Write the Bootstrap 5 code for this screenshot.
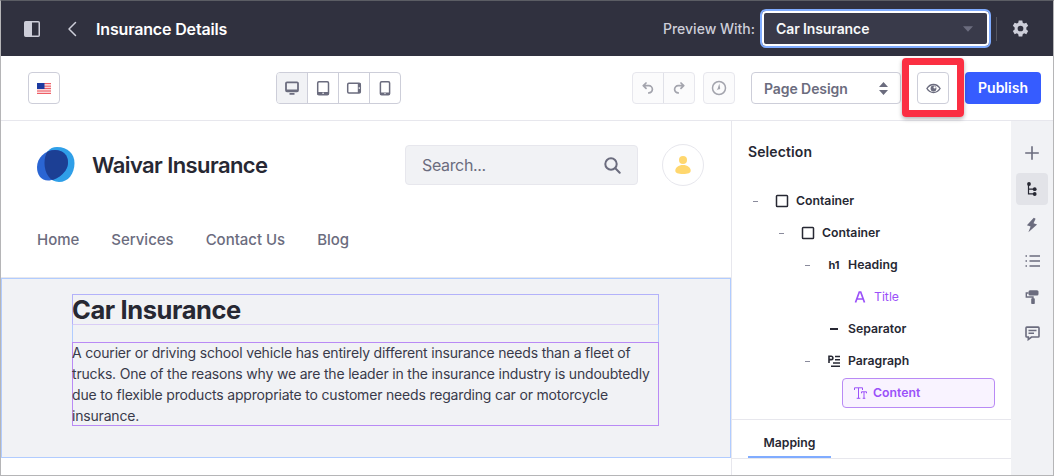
<!DOCTYPE html>
<html lang="en">
<head>
<meta charset="utf-8">
<meta name="viewport" content="width=device-width, initial-scale=1">
<title>Insurance Details</title>
<link href="https://cdn.jsdelivr.net/npm/bootstrap@5.3.0/dist/css/bootstrap.min.css" rel="stylesheet">
<style>
  html, body { height: 100%; overflow: hidden; }
  body { font-family: Inter, "Liberation Sans", sans-serif; color: #272833; font-size: 16px; line-height: 1.5; background: #fff; }
  svg { display: block; flex: none; }
  .frame { width: 1054px; height: 476px; border: 1px solid #b5b5b7; border-top-color: #5b5d64; overflow: hidden; }
  .topbar { height: 55px; background: #30313f; color: #cdced9; padding: 0 24px 0 23px; }
  .topbar .back { margin-right: -4px; }
  .topbar .title { color: #fff; font-weight: 600; margin-left: 20px; letter-spacing: -.16px; }
  .topbar .with { font-weight: 500; font-size: 14px; margin-right: 5px; }
  .picker { width: 231px; height: 39px; background: #393a4a; border: 2px solid #80acff; box-shadow: inset 0 0 0 2px #fff; border-radius: 6px; color: #f7f8f9; font-weight: 600; font-size: 14px; letter-spacing: -.1px; padding: 0 16px 0 14px; }
  .vline { width: 1px; height: 24px; background: #54555f; margin: 0 15px 0 5px; }
  .tools { height: 65px; border-bottom: 1px solid #e7e7ed; padding: 0 12px 0 27px; }
  .tbtn { width: 32px; height: 32px; border: 1px solid #cdced9; border-radius: 4px; background: #fff; color: #6b6c7e; padding: 0; display: flex; align-items: center; justify-content: center; }
  .seg { height: 32px; border: 1px solid #cdced9; border-radius: 4px; overflow: hidden; }
  .seg > span { width: 30px; display: flex; align-items: center; justify-content: center; color: #6b6c7e; }
  .seg > span + span { border-left: 1px solid #cdced9; width: 31px; }
  .seg .on { background: #f1f2f5; width: 30px; }
  .sizes { margin-left: 216px; }
  .dim { border-color: #e7e7ed; background: #fbfbfc; color: #a3a4ad; }
  .seg.dim > span { color: #a3a4ad; }
  .seg.dim > span + span { border-color: #e0e1e8; }
  .design { width: 150px; height: 32px; border: 1px solid #cdced9; border-radius: 4px; color: #6b6c7e; font-weight: 600; font-size: 14px; letter-spacing: -.08px; padding: 0 12px; }
  .spot { width: 62px; height: 59px; margin: 2px 0 0 1px; border: 7px solid #fb2f42; border-radius: 4px; box-shadow: 0 2px 4px rgba(0,0,0,.3); z-index: 2; }
  .spot .tbtn { margin-top: 1px; }
  .pub { width: 76px; height: 32px; margin-left: 1px; background: #365cff; color: #fff; border: 0; border-radius: 4px; font-weight: 600; font-size: 14px; padding: 0; line-height: 32px; }
  .canvas { width: 731px; border-right: 1px solid #e7e7ed; }
  .brand { height: 88px; padding: 0 27px 0 36px; }
  .brand .name { font-size: 22px; font-weight: 600; margin-left: 17px; letter-spacing: -.58px; color: #272833; }
  .find { width: 233px; height: 40px; border: 1px solid #e7e7ed; background: #f1f2f5; border-radius: 4px; color: #6b6c7e; padding: 0 16px; letter-spacing: -.35px; }
  .face { width: 42px; height: 42px; border: 1px solid #e7e7ed; border-radius: 50%; margin-left: 24px; }
  .menu { height: 69px; padding: 19px 36px 0; gap: 32px; color: #6b6c7e; font-weight: 500; font-size: 15px; letter-spacing: -.02px; line-height: 24px; border-bottom: 1px solid #e7e7ed; }
  .hero { height: 180px; width: 730px; background: #f1f2f5; border: 1px solid #b1ccff; padding: 15px 70px 0; }
  .hbox { border: 1px solid #b1ccff; height: 132px; width: 587px; }
  .hbox h1 { font-size: 25.5px; font-weight: 700; line-height: 31px; height: 31px; margin: -1px -1px 17px; border: 1px solid #b3b2fa; border-bottom-color: #d9cdf6; letter-spacing: -.41px; color: #272833; }
  .hbox h1 span { display: block; margin: -1px 0 0 -1px; }
  .hbox p { margin: 0 -1px; height: 84px; border: 1px solid #b98af5; font-size: 14px; letter-spacing: -.185px; line-height: 21px; white-space: nowrap; color: #393a4a; }
  .hbox p span { display: block; margin: -1px 0 0 -1px; }
  .side { width: 279px; color: #272833; }
  .side h2 { font-size: 14px; font-weight: 600; line-height: 20px; margin: 21px 0 23px 16px; letter-spacing: .1px; }
  .node { height: 32px; font-size: 12.25px; font-weight: 600; display: flex; align-items: center; }
  .node .dash { width: 5px; height: 1px; background: #8a8b9c; margin-right: 16px; }
  .node .dash.off { background: transparent; }
  .node .ico { width: 16px; height: 16px; margin-right: 6px; display: flex; align-items: center; justify-content: center; font-size: 11px; font-weight: 700; }
  .d0 { padding-left: 21px; } .d1 { padding-left: 47px; } .d2 { padding-left: 73px; } .d3 { padding-left: 99px; color: #9b51f9; }
  .node.picked { margin: 1px 0 0 110px; width: 153px; height: 30px; border: 1px solid #b98af5; border-radius: 4px; background: #f9f3ff; padding-left: 9px; color: #9b51f9; }
  .node.picked .ico { margin-right: 5px; }
  .tabs { margin-top: 11px; height: 40px; border-top: 1px solid #e7e7ed; border-bottom: 1px solid #e7e7ed; padding-left: 16px; }
  .tabs span { display: block; width: 83px; height: 38px; border-bottom: 2px solid #80acff; text-align: center; font-size: 12.25px; font-weight: 600; line-height: 46px; }
  .rail { width: 42px; background: #f1f2f5; color: #6b6c7e; padding: 16px 0 0 5px; gap: 4px; }
  .rail span { width: 32px; height: 32px; border-radius: 4px; display: flex; align-items: center; justify-content: center; }
  .rail .on { background: #e2e3e8; color: #272833; }
</style>
</head>
<body>
<div class="frame d-flex flex-column">
  <header class="topbar d-flex align-items-center">
    <svg width="16" height="16" viewBox="0 0 16 16"><rect x=".75" y=".75" width="14.5" height="14.5" rx="1" fill="none" stroke="#cdced9" stroke-width="1.5"/><path d="M1 1h7v14H1z" fill="#cdced9"/></svg>
    <svg class="back ms-4" width="16" height="16" viewBox="0 0 16 16" fill="none" stroke="#cdced9" stroke-width="1.5" stroke-linecap="round" stroke-linejoin="round"><path d="M11.500 1.500L5 8l6.500 6.500"/></svg>
    <span class="title">Insurance Details</span>
    <span class="with ms-auto">Preview With:</span>
    <div class="picker d-flex align-items-center justify-content-between">Car Insurance
      <svg width="10" height="6" viewBox="0 0 9 5"><path d="M0 0h9L4.500 5z" fill="#6b6c7e"/></svg></div>
    <span class="vline"></span>
    <svg width="17" height="17" viewBox="0 0 16 16"><path fill="#cdced9" fill-rule="evenodd" d="M6.300.4h3.400l.4 2.200 1.300.8 2.100-.8 1.700 2.900-1.700 1.500v1.900l1.700 1.500-1.700 2.900-2.100-.8-1.300.8-.4 2.300H6.300l-.4-2.300-1.300-.8-2.100.8L.8 10.400l1.700-1.500V7L.8 5.500l1.700-2.900 2.100.8 1.300-.8zM8 5.300a2.700 2.700 0 1 0 0 5.400 2.700 2.700 0 0 0 0-5.400z"/></svg>
  </header>

  <div class="tools d-flex align-items-center">
    <button class="tbtn"><svg width="14" height="11" viewBox="0 0 14 11"><path fill="#fbd5d8" d="M0 0h14v11H0z"/><path stroke="#ee5f66" d="M0 .5h14M0 3.200h14M0 5.500h14M0 8h14M0 10.500h14"/><path fill="#1c3aa0" d="M0 0h7.500v6H0z"/></svg></button>
    <div class="seg sizes d-flex">
      <span class="on"><svg width="16" height="16" viewBox="0 0 16 16"><rect x="2" y="2.300" width="12" height="9" rx="1" fill="none" stroke="currentColor" stroke-width="1.800"/><path fill="currentColor" d="M2 9.500h12v2H2zM5.500 13h5v1.700h-5z"/></svg></span>
      <span><svg width="16" height="16" viewBox="0 0 16 16"><rect x="2.700" y="1.800" width="10.800" height="13" rx="1.200" fill="none" stroke="currentColor" stroke-width="1.500"/><path fill="currentColor" d="M2.500 12h11v3h-11z"/><circle cx="8.100" cy="13.300" r=".8" fill="#fff"/></svg></span>
      <span><svg width="16" height="16" viewBox="0 0 16 16"><rect x="1.700" y="3.200" width="12.600" height="9.800" rx="1.200" fill="none" stroke="currentColor" stroke-width="1.500"/><path fill="currentColor" d="M11.800 3h2.700v10h-2.700z"/><circle cx="13.300" cy="8.100" r=".8" fill="#fff"/></svg></span>
      <span><svg width="16" height="16" viewBox="0 0 16 16"><rect x="3.400" y="1.800" width="9.200" height="13" rx="1.200" fill="none" stroke="currentColor" stroke-width="1.500"/><path fill="currentColor" d="M3.200 12.500h9.600V15H3.200z"/><circle cx="8" cy="13.600" r=".7" fill="#fff"/></svg></span>
    </div>
    <div class="seg dim d-flex ms-auto">
      <span><svg width="12" height="12" viewBox="0 0 12 12" fill="none" stroke="currentColor" stroke-width="1.700" stroke-linecap="round" stroke-linejoin="round"><path d="M4 1L1.300 3.700 4 6.400M1.500 3.700h5.300a3.600 3.600 0 0 1 0 7.200"/></svg></span>
      <span><svg width="12" height="12" viewBox="0 0 12 12" fill="none" stroke="currentColor" stroke-width="1.700" stroke-linecap="round" stroke-linejoin="round"><path d="M8 1l2.700 2.700L8 6.400M10.500 3.700H5.200a3.600 3.600 0 0 0 0 7.200"/></svg></span>
    </div>
    <button class="tbtn dim ms-2"><svg width="16" height="16" viewBox="0 0 16 16"><circle cx="8" cy="8" r="6.500" fill="none" stroke="currentColor" stroke-width="1.500"/><path d="M8.300 3.500l.9 4.800a1.300 1.300 0 0 1-2 1L5.500 10.500l1.200-2z" fill="currentColor"/></svg></button>
    <div class="design d-flex align-items-center justify-content-between ms-3">Page Design
      <svg width="9" height="13" viewBox="0 0 9 13" fill="currentColor"><path d="M0 5L4.500 0 9 5zM0 8h9l-4.500 5z"/></svg></div>
    <div class="spot d-flex align-items-center justify-content-center align-self-start">
      <button class="tbtn"><svg width="15" height="15" viewBox="0 0 16 16"><path d="M1 8c1.800-2.900 4.200-4.300 7-4.300S13.200 5.100 15 8c-1.800 2.900-4.200 4.300-7 4.300S2.800 10.900 1 8z" fill="none" stroke="currentColor" stroke-width="1.500"/><circle cx="8" cy="8" r="3.100" fill="currentColor"/><circle cx="9.200" cy="6.800" r="1.200" fill="#fff"/></svg></button>
    </div>
    <button class="btn pub">Publish</button>
  </div>

  <div class="d-flex flex-grow-1">
    <main class="canvas flex-shrink-0">
      <div class="brand d-flex align-items-center">
        <svg width="38" height="36" viewBox="0 0 38 36">
          <clipPath id="lobe"><path d="M20 0C31 0 37.500 7 37.500 16 37.500 27 31 35 22 35 13 35 7.500 26 7.500 16 7.500 6 12 0 20 0z"/></clipPath>
          <path d="M20 0C31 0 37.500 7 37.500 16 37.500 27 31 35 22 35 13 35 7.500 26 7.500 16 7.500 6 12 0 20 0z" fill="#2f9fe8"/>
          <path d="M18 3C26 3 31 8 31 15.500 31 25 20 33.500 11 33.500 4 33.500 0 28 0 20 0 11 8 3 18 3z" fill="#2a65d3"/>
          <path clip-path="url(#lobe)" d="M18 3C26 3 31 8 31 15.500 31 25 20 33.500 11 33.500 4 33.500 0 28 0 20 0 11 8 3 18 3z" fill="#1c3f94"/></svg>
        <span class="name">Waivar Insurance</span>
        <div class="find d-flex align-items-center justify-content-between ms-auto">Search...
          <svg width="17" height="17" viewBox="0 0 17 17" fill="none" stroke="currentColor" stroke-width="2" stroke-linecap="round"><circle cx="7" cy="7" r="5.700"/><path d="M11.300 11.300l4.400 4.400"/></svg></div>
        <div class="face d-flex align-items-center justify-content-center"><svg width="16" height="18" viewBox="0 0 16 18" fill="#ffd76e"><circle cx="8" cy="4" r="4"/><path d="M.3 14.800C.3 11.500 3.500 9 8 9s7.700 2.500 7.700 5.800C15.700 17 13 18 8 18S.3 17 .3 14.800z"/></svg></div>
      </div>
      <nav class="menu d-flex"><span>Home</span><span>Services</span><span>Contact Us</span><span>Blog</span></nav>
      <section class="hero"><div class="hbox">
        <h1><span>Car Insurance</span></h1>
        <p><span>A courier or driving school vehicle has entirely different insurance needs than a fleet of<br>trucks. One of the reasons why we are the leader in the insurance industry is undoubtedly<br>due to flexible products appropriate to customer needs regarding car or motorcycle<br>insurance.</span></p>
      </div></section>
    </main>

    <aside class="side flex-shrink-0">
      <h2>Selection</h2>
      <div class="node d0"><i class="dash"></i><span class="ico"><svg width="14" height="14" viewBox="0 0 14 14"><rect x="1.500" y="1.500" width="11" height="11" rx=".8" fill="none" stroke="currentColor" stroke-width="1.500"/></svg></span>Container</div>
      <div class="node d1"><i class="dash"></i><span class="ico"><svg width="14" height="14" viewBox="0 0 14 14"><rect x="1.500" y="1.500" width="11" height="11" rx=".8" fill="none" stroke="currentColor" stroke-width="1.500"/></svg></span>Container</div>
      <div class="node d2"><i class="dash"></i><span class="ico">h1</span>Heading</div>
      <div class="node d3"><i class="dash off"></i><span class="ico"><svg width="12" height="12" viewBox="0 0 12 12" fill="none" stroke="currentColor" stroke-width="1.700"><path d="M1.500 11.500L5.300 1h1.400l3.800 10.500M3 8h6"/></svg></span><span class="fw-normal">Title</span></div>
      <div class="node d2"><i class="dash off"></i><span class="ico"><svg width="8" height="2"><path fill="currentColor" d="M0 0h8v2H0z"/></svg></span>Separator</div>
      <div class="node d2"><i class="dash"></i><span class="ico"><svg width="12" height="12" viewBox="0 0 12 12" fill="none" stroke="currentColor" stroke-width="1.600"><path d="M1 8V1.200h2.200a1.700 1.700 0 0 1 0 3.400H1M7 1.500h5M7 4.700h5M5 8h7M3 11.200h9"/></svg></span>Paragraph</div>
      <div class="node picked"><span class="ico"><svg width="13" height="12" viewBox="0 0 13 12" fill="none" stroke="currentColor"><path d="M.5 3V.8h8V3M4.500 1v10.300M2.700 11.300h3.600M7.500 6.300V4.800h5v1.500M10 5v6.300M8.700 11.300h2.600"/></svg></span>Content</div>
      <div class="tabs"><span>Mapping</span></div>
    </aside>

    <div class="rail d-flex flex-column flex-grow-1">
      <span><svg width="14" height="14" viewBox="0 0 14 14" stroke="currentColor" stroke-width="1.600"><path d="M7 .2v13.600M.2 7h13.600"/></svg></span>
      <span class="on"><svg width="14" height="16" viewBox="0 0 14 16" fill="currentColor"><path d="M3.500 3v9.800H9M3.500 8.200H9" fill="none" stroke="currentColor" stroke-width="1.200"/><circle cx="4" cy="3" r="1.900"/><circle cx="9.700" cy="8.200" r="1.900"/><circle cx="9.700" cy="13" r="1.900"/></svg></span>
      <span><svg width="14" height="16" viewBox="0 0 14 16" fill="currentColor"><path d="M8.800.8L1.900 8.200 5.600 9.600 3.400 15.200 12.100 7.600 8.500 6.300 10.600 1.800z"/></svg></span>
      <span><svg width="15" height="14" viewBox="0 0 15 14" stroke="currentColor" stroke-width="1.600"><path d="M4.500 2H15M4.500 7H15M4.500 12H15M.5 2H2M.5 7H2M.5 12H2"/></svg></span>
      <span><svg width="16" height="16" viewBox="0 0 16 16" fill="currentColor"><rect x="4.500" y="1.200" width="10" height="5.300" rx="1.500"/><path d="M4.500 4H2.300v4H9v2" fill="none" stroke="currentColor" stroke-width="1.400"/><rect x="7.200" y="9.200" width="3.600" height="5.800" rx=".8"/></svg></span>
      <span><svg width="15" height="15" viewBox="0 0 15 15" fill="none" stroke="currentColor" stroke-width="1.600"><path d="M1.800 1.100h11.400a.8.800 0 0 1 .8.800v8.300a.8.800 0 0 1-.8.800H6.500L3.300 13.500V11H1.800a.8.800 0 0 1-.8-.8V1.900a.8.800 0 0 1 .8-.8z"/><path d="M3.500 4.500h8M3.500 7.300h5.500"/></svg></span>
    </div>
  </div>
</div>
<script src="https://cdn.jsdelivr.net/npm/bootstrap@5.3.0/dist/js/bootstrap.bundle.min.js"></script>
</body>
</html>
